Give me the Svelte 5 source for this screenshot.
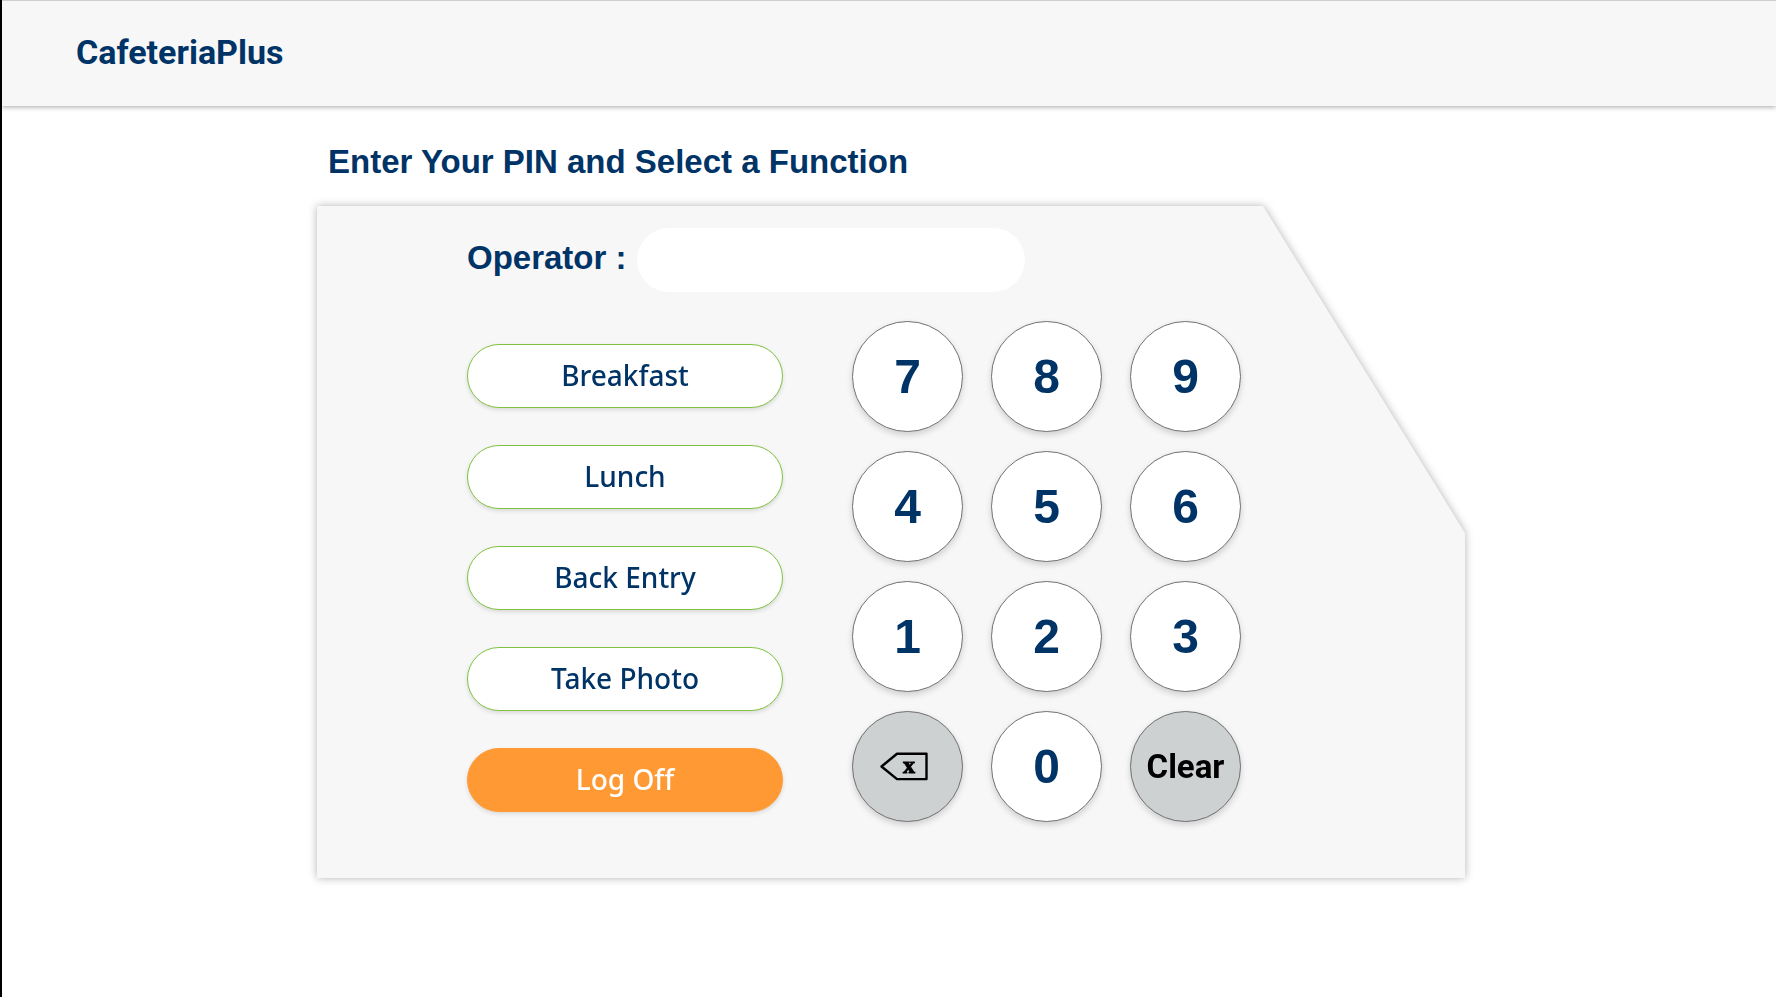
<script>
  const functions = ['Breakfast', 'Lunch', 'Back Entry', 'Take Photo'];
  const keys = ['7', '8', '9', '4', '5', '6', '1', '2', '3'];
  let pin = $state('');

  const press = (key) => (pin += key);
  const erase = () => (pin = pin.slice(0, -1));
  const clear = () => (pin = '');
</script>

<div class="page">
  <header>
    <a class="brand" href="#home">CafeteriaPlus</a>
  </header>

  <main>
    <h1>Enter Your PIN and Select a Function</h1>
    <div class="shadow">
      <section class="panel">
        <div class="operator">
          <label for="pin">Operator :</label>
          <input id="pin" type="password" autocomplete="off" bind:value={pin} />
        </div>
        <div class="controls">
          <div class="functions">
            {#each functions as name}
              <button type="button" class="pill">{name}</button>
            {/each}
            <button type="button" class="pill logoff">Log Off</button>
          </div>
          <div class="keypad">
            {#each keys as key}
              <button type="button" class="key" onclick={() => press(key)}>{key}</button>
            {/each}
            <button type="button" class="key grey back" aria-label="Backspace" onclick={erase}>
              <svg width="48" height="48" viewBox="0 -10 48 48" aria-hidden="true">
                <path d="M1.5 13.5 17 .7H46.5V26.1H17Z" fill="none" stroke="#000" stroke-width="2.4" stroke-linejoin="round" />
                <text x="29" y="19.5" text-anchor="middle">x</text>
              </svg>
            </button>
            <button type="button" class="key" onclick={() => press('0')}>0</button>
            <button type="button" class="key grey clear" onclick={clear}>Clear</button>
          </div>
        </div>
      </section>
    </div>
  </main>
</div>

<style>
  :global(body) {
    margin: 0;
    background: #fff;
  }

  .page {
    box-sizing: border-box;
    min-height: 100vh;
    border-left: 2px solid #000;
    color: #003366;
    font-family: 'Liberation Sans', Arial, sans-serif;
  }

  header {
    box-sizing: border-box;
    display: flex;
    align-items: center;
    min-height: 106px;
    padding: 0 74px 4px;
    border-top: 1px solid #cdcdd2;
    background: #f7f7f7;
    box-shadow: 0 1px 5px rgba(0, 0, 0, 0.35);
  }

  .brand {
    color: inherit;
    font-family: Roboto, 'Liberation Sans', sans-serif;
    font-size: 34px;
    font-weight: 700;
    line-height: 40px;
    text-decoration: none;
  }

  main {
    max-width: 1148px;
    margin: 0 auto;
    padding: 36px 0 40px 4px;
  }

  h1 {
    margin: 0 0 24px;
    padding-left: 11px;
    font-size: 33px;
    font-weight: 700;
    line-height: 40px;
  }

  .shadow {
    filter: drop-shadow(0 0 4px rgba(0, 0, 0, 0.3));
  }

  .panel {
    padding: 22px 150px 56px;
    background: #f7f7f7;
    clip-path: polygon(0 0, calc(100% - 202px) 0, 100% 327px, 100% 100%, 0 100%);
  }

  .operator {
    display: flex;
    align-items: center;
    gap: 10px;
    margin-bottom: 29px;
  }

  label {
    padding-bottom: 4px;
    font-size: 33px;
    font-weight: 700;
    line-height: 40px;
  }

  input {
    box-sizing: border-box;
    width: 388px;
    height: 64px;
    padding: 0 28px;
    border: 0;
    border-radius: 32px;
    background: #fff;
    color: inherit;
    font: 700 33px 'Liberation Sans', Arial, sans-serif;
  }

  .controls {
    display: flex;
    align-items: flex-start;
    gap: 69px;
  }

  .functions {
    display: flex;
    flex-direction: column;
    gap: 37px;
    padding-top: 23px;
  }

  .pill {
    box-sizing: border-box;
    width: 316px;
    height: 64px;
    padding: 0 0 2px;
    border: 1px solid #7fc241;
    border-radius: 32px;
    background: #fff;
    box-shadow: 0 2px 4px rgba(0, 0, 0, 0.12);
    color: #003366;
    font: 500 28px 'Noto Sans', 'Segoe UI', sans-serif;
  }

  .logoff {
    border-color: #ff9933;
    background: #ff9933;
    color: #fff;
  }

  .keypad {
    display: grid;
    grid-template-columns: repeat(3, 111px);
    gap: 19px 28px;
  }

  .key {
    box-sizing: border-box;
    height: 111px;
    padding: 0;
    border: 1px solid #707070;
    border-radius: 50%;
    background: #fff;
    box-shadow: 0 3px 6px rgba(0, 0, 0, 0.16);
    color: #003366;
    font: 700 48px 'Liberation Sans', Arial, sans-serif;
  }

  .grey {
    background: #cdd1d2;
    color: #000;
  }

  .back {
    display: flex;
    align-items: center;
    justify-content: center;
    padding-right: 8px;
  }

  .back text {
    fill: #000;
    stroke: #000;
    stroke-width: 1px;
    font: 700 24px 'Liberation Serif', serif;
  }

  .clear {
    font-family: Roboto, 'Liberation Sans', sans-serif;
    font-size: 33px;
  }
</style>
